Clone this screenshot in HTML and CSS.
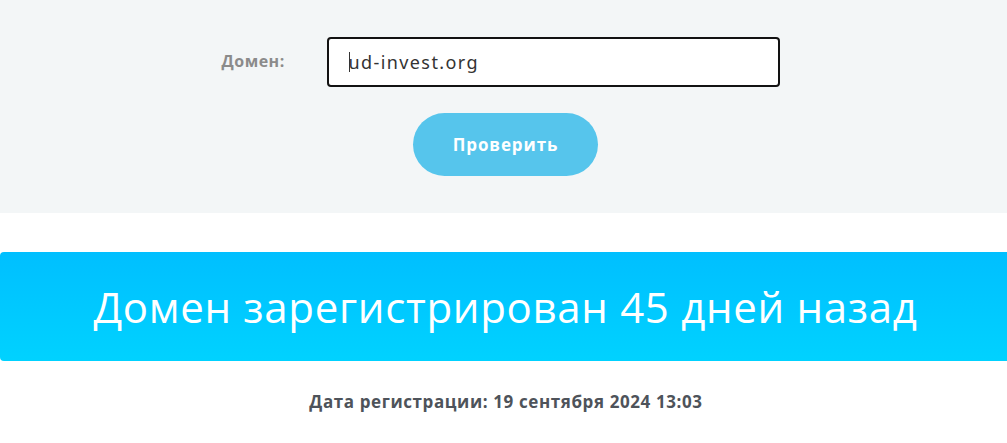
FILE: index.html
```html
<!DOCTYPE html>
<html lang="ru">
<head>
<meta charset="utf-8">
<title>Проверка домена</title>
<link rel="stylesheet" href="styles.css">
</head>
<body>
<section class="check">
  <form class="check-form">
    <div class="row">
      <label class="label" for="domain">Домен:</label>
      <div class="field"><span class="caret"></span><span class="value">ud-invest.org</span></div>
    </div>
    <button class="btn" type="button">Проверить</button>
  </form>
</section>
<section class="result">
  <h1 class="banner">Домен зарегистрирован 45 дней назад</h1>
  <p class="date">Дата регистрации: 19 сентября 2024 13:03</p>
</section>
</body>
</html>
```

FILE: styles.css
```css
html, body {
  margin: 0;
  padding: 0;
  background: #ffffff;
}
body {
  font-family: "Open Sans", "Noto Sans", sans-serif;
}
.check {
  background: #f3f6f7;
  height: 213px;
  box-sizing: border-box;
  padding-top: 37px;
}
.check-form {
  display: flex;
  flex-direction: column;
  align-items: center;
}
.row {
  display: flex;
  align-items: center;
  gap: 41px;
  margin-right: 6px;
}
.label {
  width: 64px;
  font-size: 16px;
  font-weight: 700;
  letter-spacing: 0.5px;
  color: #8b8b8b;
  margin-top: -2px;
  white-space: nowrap;
}
.field {
  width: 453px;
  height: 50px;
  box-sizing: border-box;
  border: 2px solid #121212;
  border-radius: 4px;
  background: #fff;
  display: flex;
  align-items: center;
  padding-left: 20px;
  font-family: "Noto Sans", sans-serif;
  font-size: 18px;
  letter-spacing: 1.4px;
  color: #333;
}
.caret {
  width: 1px;
  height: 20px;
  background: #333;
  margin-right: -1px;
}
.btn {
  margin-top: 26px;
  margin-left: 4px;
  width: 185px;
  height: 63px;
  border: 0;
  border-radius: 32px;
  background: #56c5ec;
  color: #fff;
  font-family: "Open Sans", sans-serif;
  font-weight: 700;
  font-size: 17px;
  letter-spacing: 0.9px;
}
.result {
  padding-top: 39px;
}
.banner {
  margin: 0;
  height: 109px;
  display: flex;
  align-items: center;
  justify-content: center;
  background: linear-gradient(#00bfff, #00d2ff);
  border-radius: 4px 0 0 4px;
  color: #fff;
  font-weight: 400;
  font-size: 42px;
  letter-spacing: 0.68px;
  padding-left: 4px;
}
.date {
  margin: 29px 0 0;
  text-align: center;
  font-size: 17px;
  font-weight: 700;
  letter-spacing: 0.6px;
  color: #4e535a;
  padding-left: 5px;
}
```
